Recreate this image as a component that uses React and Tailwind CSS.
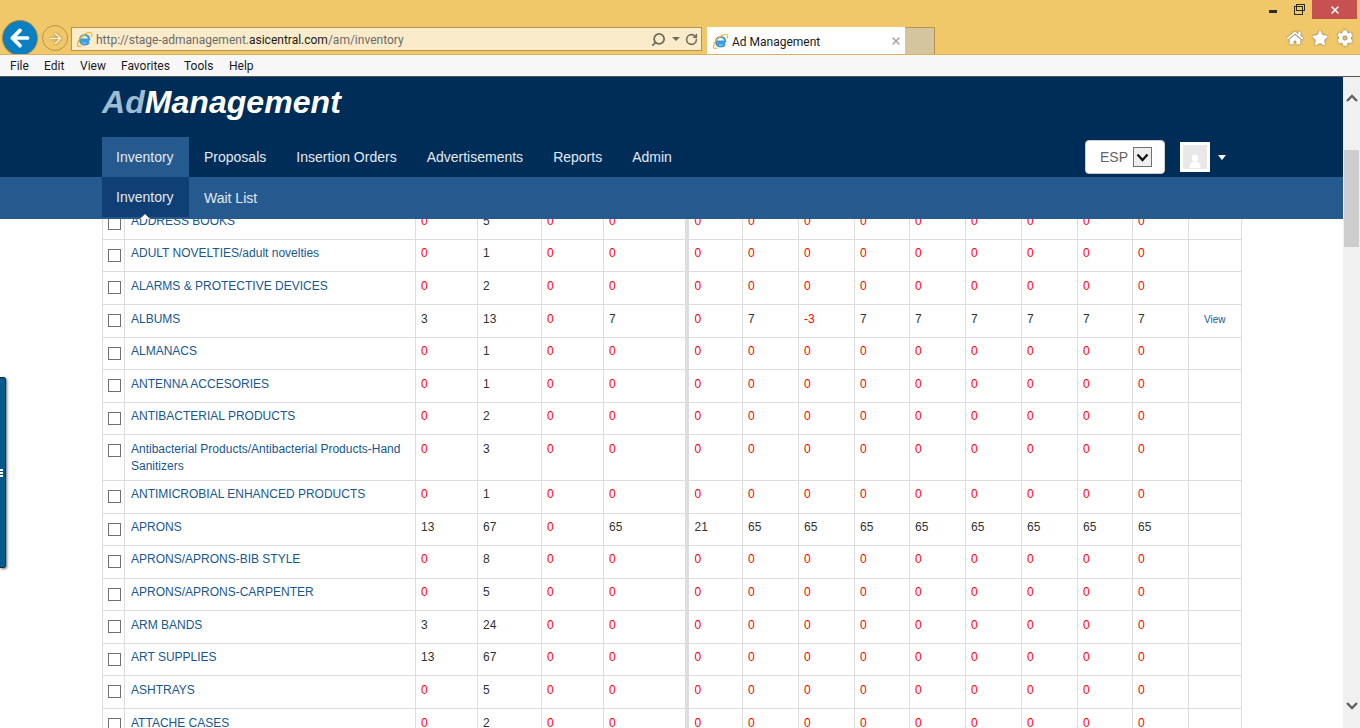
import { ArrowLeft, ArrowRight, Search, RotateCw, X } from 'lucide-react'
import { FaHome, FaStar, FaCog } from 'react-icons/fa'

const zeros = [0, 0, 0, 0, 0, 0, 0, 0, 0]

// tight rows sit one pixel higher, the original row heights are fractional
const rows = [
  { name: 'ADDRESS BOOKS', h: 'h-[32px]', tight: true, a: [0, 5, 0, 0], b: zeros },
  { name: 'ADULT NOVELTIES/adult novelties', h: 'h-[32px]', tight: true, a: [0, 1, 0, 0], b: zeros },
  { name: 'ALARMS & PROTECTIVE DEVICES', h: 'h-[33px]', a: [0, 2, 0, 0], b: zeros },
  { name: 'ALBUMS', h: 'h-[33px]', a: [3, 13, 0, 7], b: [0, 7, -3, 7, 7, 7, 7, 7, 7], view: true },
  { name: 'ALMANACS', h: 'h-[32px]', tight: true, a: [0, 1, 0, 0], b: zeros },
  { name: 'ANTENNA ACCESORIES', h: 'h-[33px]', a: [0, 1, 0, 0], b: zeros },
  { name: 'ANTIBACTERIAL PRODUCTS', h: 'h-[32px]', tight: true, a: [0, 2, 0, 0], b: zeros },
  { name: 'Antibacterial Products/Antibacterial Products-Hand Sanitizers', h: 'h-[46px]', a: [0, 3, 0, 0], b: zeros },
  { name: 'ANTIMICROBIAL ENHANCED PRODUCTS', h: 'h-[33px]', tight: true, a: [0, 1, 0, 0], b: zeros },
  { name: 'APRONS', h: 'h-[32px]', tight: true, a: [13, 67, 0, 65], b: [21, 65, 65, 65, 65, 65, 65, 65, 65] },
  { name: 'APRONS/APRONS-BIB STYLE', h: 'h-[33px]', tight: true, a: [0, 8, 0, 0], b: zeros },
  { name: 'APRONS/APRONS-CARPENTER', h: 'h-[32px]', tight: true, a: [0, 5, 0, 0], b: zeros },
  { name: 'ARM BANDS', h: 'h-[33px]', a: [3, 24, 0, 0], b: zeros },
  { name: 'ART SUPPLIES', h: 'h-[32px]', tight: true, a: [13, 67, 0, 0], b: zeros },
  { name: 'ASHTRAYS', h: 'h-[33px]', a: [0, 5, 0, 0], b: zeros },
  { name: 'ATTACHE CASES', h: 'h-[32px]', a: [0, 2, 0, 0], b: zeros },
]

const colWidths = [22, 291, 62, 64, 62, 83, 56, 56, 56, 55, 56, 56, 56, 55, 56, 53]

function IeLogo({ className }) {
  return (
    <svg className={className} viewBox="0 0 20 20" fill="none">
      <path d="M15.5 12.5H6.2M5.2 10H15.6C15.6 6.8 13.4 4.6 10.4 4.6C7.2 4.6 4.6 7 4.6 10.3C4.6 13.6 7 16 10.4 16C12.6 16 14.3 15 15.3 13.4" stroke="#3b9ddd" strokeWidth="2.4" />
      <path d="M2.5 16C0.5 12.5 7 5 12 2.8C15.5 1.2 18.8 1.2 18.6 4.2C18.5 5.2 18 6 17.5 6.8M1.6 15.2C1 17.8 3 19 6.4 17.4" stroke="#f0b429" strokeWidth="1.3" />
    </svg>
  )
}

function Num({ v }) {
  return <span className={v <= 0 ? 'text-[#ff0000]' : 'text-[#333333]'}>{v}</span>
}

function BrowserChrome() {
  return (
    <div className="font-['Roboto','Noto_Sans',sans-serif] shrink-0">
      <div className="h-[55px] bg-[#f0c869] border-b border-[#d8b25e] overflow-hidden">
        {/* window buttons */}
        <div className="h-[19px] flex justify-end items-start pr-[3px]">
          <div className="w-[8px] h-[3px] mt-[10px] mr-[17px] bg-[#2b2b2b]" />
          <div className="relative w-[9px] h-[9px] mt-[6px] mr-[9px] border-[1.5px] border-[#2b2b2b] bg-[#f0c869]">
            <div className="absolute -top-[3px] left-[1px] w-[9px] h-[7px] border border-[#2b2b2b]" />
          </div>
          <div className="w-[45px] h-[19px] bg-[#c75050] flex items-center justify-center">
            <X className="w-[12px] h-[12px] text-white" strokeWidth={3} />
          </div>
        </div>
        {/* nav, address and tabs */}
        <div className="h-[36px] flex items-start pl-[2px]">
          <div className="w-[36px] h-[36px] mt-[1px] rounded-full bg-[#0a80c2] border border-[#a8843f] flex items-center justify-center shrink-0">
            <ArrowLeft className="w-[26px] h-[26px] text-white" strokeWidth={3.4} />
          </div>
          <div className="w-[26px] h-[26px] mt-[6px] ml-[4px] rounded-full border border-[#b8954a] flex items-center justify-center shrink-0">
            <ArrowRight className="w-[17px] h-[17px] text-[#fbeecb] drop-shadow-[0_0_1px_#8a6d2f]" strokeWidth={2.4} />
          </div>
          <div className="w-[631px] h-[24px] mt-[8px] ml-[3px] bg-[#faecca] border border-[#b5934b] flex items-center pl-[4px] pr-[3px] shrink-0">
            <IeLogo className="w-[17px] h-[17px] shrink-0" />
            <div className="ml-[3px] pt-[2px] text-[12px] text-[#6b6b6b] whitespace-nowrap">
              http://stage-admanagement.<span className="text-[#1a1a1a]">asicentral.com</span>/am/inventory
            </div>
            <div className="ml-auto flex items-center text-[#6e6a5c]">
              <Search className="w-[15px] h-[15px] -scale-x-100" strokeWidth={2.8} />
              <div className="ml-[6px] w-0 h-0 border-x-[4px] border-x-transparent border-t-[4px] border-t-[#6e6a5c]" />
              <RotateCw className="ml-[5px] w-[13px] h-[13px]" strokeWidth={2.8} />
            </div>
          </div>
          <div className="w-[198px] h-[28px] mt-[8px] ml-[5px] bg-white flex items-center pl-[5px] pr-[3px] shrink-0">
            <IeLogo className="w-[17px] h-[17px] shrink-0" />
            <div className="ml-[3px] pt-[2px] text-[12px] text-[#1a1a1a] whitespace-nowrap">Ad Management</div>
            <X className="ml-auto w-[12px] h-[12px] text-[#a8a8a8]" strokeWidth={3.4} />
          </div>
          <div className="w-[30px] h-[28px] mt-[8px] bg-[#d5c59f] border border-b-0 border-l-0 border-[#b5934b] shrink-0" />
          <div className="ml-auto flex items-center pt-[11px] pr-[7px] gap-[9px]">
            <FaHome className="w-[16px] h-[16px] text-white drop-shadow-[0_0_1px_#6b6b6b]" />
            <FaStar className="w-[16px] h-[16px] text-white drop-shadow-[0_0_1px_#6b6b6b]" />
            <FaCog className="w-[16px] h-[16px] text-white drop-shadow-[0_0_1px_#6b6b6b]" />
          </div>
        </div>
      </div>
      <div className="h-[22px] bg-[#f7f7f7] border-b border-[#555555] flex items-center pt-[1px] pl-[10px] text-[12px] text-[#1a1a1a]">
        <span className="w-[34px]">File</span>
        <span className="w-[36px]">Edit</span>
        <span className="w-[41px]">View</span>
        <span className="w-[63px]">Favorites</span>
        <span className="w-[45px]">Tools</span>
        <span>Help</span>
      </div>
    </div>
  )
}

function Header() {
  return (
    <div className="relative z-10 shrink-0 font-['Liberation_Sans',sans-serif]">
      <div className="h-[100px] bg-[#002d58] pl-[102px] flex flex-col">
        <div className="h-[60px] text-[32px] leading-[50px] font-bold italic text-white tracking-[0.05px]">
          <span className="text-[#9dbbd2]">Ad</span>Management
        </div>
        <div className="flex items-stretch h-[40px] text-[14px] text-[#e3e9f0]">
          <div className="w-[87px] bg-[#265a8f] flex items-center pl-[14px]">Inventory</div>
          <div className="ml-[15px] flex items-center">Proposals</div>
          <div className="ml-[30px] flex items-center">Insertion Orders</div>
          <div className="ml-[30px] flex items-center">Advertisements</div>
          <div className="ml-[30px] flex items-center">Reports</div>
          <div className="ml-[30px] flex items-center">Admin</div>
          <div className="ml-auto w-[258px] flex items-start">
            <div className="w-[80px] h-[34px] mt-[3px] bg-white rounded-[4px] border border-[#cccccc] flex items-center pl-[14px]">
              <span className="text-[#666666]">ESP</span>
              <div className="ml-[5px] w-[19px] h-[20px] bg-[#eeeeee] border border-[#707070] flex items-center justify-center">
                <svg className="w-[13px] h-[9px]" viewBox="0 0 13 9" fill="none">
                  <path d="M1.5 1.5L6.5 7L11.5 1.5" stroke="#111111" strokeWidth="2.2" />
                </svg>
              </div>
            </div>
            <div className="ml-[15px] mt-[5px] w-[30px] h-[30px] bg-[#e8e8e8] border-[3px] border-white flex items-end justify-center">
              <svg className="w-[14px] h-[16px]" viewBox="0 0 14 16" fill="white">
                <circle cx="7" cy="5" r="3.2" />
                <path d="M1.5 15C1.5 10.5 3.5 8.5 7 8.5C10.5 8.5 12.5 10.5 12.5 15Z" />
              </svg>
            </div>
            <div className="ml-[8px] mt-[18px] w-0 h-0 border-x-[4.5px] border-x-transparent border-t-[5px] border-t-white" />
          </div>
        </div>
      </div>
      <div className="h-[42px] bg-[#265a8f] pl-[102px] flex items-start text-[14px] text-[#e3e9f0]">
        <div className="relative w-[87px] h-[40px] bg-[#0f3f75] flex items-center pl-[14px]">
          Inventory
          <div className="absolute -bottom-[2px] left-[38px] w-0 h-0 border-x-[5px] border-x-transparent border-b-[5px] border-b-white" />
        </div>
        <div className="ml-[15px] h-[42px] flex items-center">Wait List</div>
      </div>
    </div>
  )
}

function InventoryTable() {
  return (
    <table className="table-fixed border-collapse w-[1139px] ml-[102px] -mt-[12px] text-[12px] font-['Liberation_Sans',sans-serif] bg-white">
      <colgroup>
        {colWidths.map((w, i) => (
          <col key={i} style={{ width: w }} />
        ))}
      </colgroup>
      <tbody>
        {rows.map((row) => {
          const pad = row.tight ? 'pt-[5px]' : 'pt-[6px]'
          return (
            <tr key={row.name} className={row.h}>
              <td className="border border-[#dddddd] align-top pl-[5px] pt-[9px]">
                <div className="w-[13px] h-[13px] border-[1.5px] border-[#707070]" />
              </td>
              <td className={`border border-[#dddddd] align-top pl-[6px] pr-[6px] leading-[17px] text-[#18578f] ${pad}`}>
                {row.name}
              </td>
              {row.a.map((v, i) => (
                <td key={i} className={`border border-[#dddddd] align-top pl-[5px] leading-[17px] ${pad}`}>
                  <Num v={v} />
                </td>
              ))}
              {row.b.map((v, i) => (
                <td key={i} className={`border border-[#dddddd] align-top leading-[17px] ${pad} ${i === 0 ? 'border-l-[4px] pl-[6px]' : 'pl-[5px]'}`}>
                  <Num v={v} />
                </td>
              ))}
              <td className="border border-[#dddddd] align-top pl-[15px] pt-[6px] leading-[17px] text-[10px] text-[#18578f]">
                {row.view ? 'View' : ''}
              </td>
            </tr>
          )
        })}
      </tbody>
    </table>
  )
}

function Scrollbar() {
  return (
    <div className="w-[17px] shrink-0 bg-[#f0f0f0] flex flex-col items-center">
      <svg className="w-[12px] h-[8px] mt-[17px]" viewBox="0 0 12 8" fill="none">
        <path d="M1 7L6 2L11 7" stroke="#606060" strokeWidth="2.4" />
      </svg>
      <div className="w-[15px] h-[97px] mt-[48px] bg-[#cdcdcd]" />
      <svg className="w-[12px] h-[8px] mt-auto mb-[18px]" viewBox="0 0 12 8" fill="none">
        <path d="M1 1L6 6L11 1" stroke="#606060" strokeWidth="2.4" />
      </svg>
    </div>
  )
}

export default function App() {
  return (
    <div className="relative w-[1360px] h-[728px] overflow-hidden flex flex-col bg-white">
      <BrowserChrome />
      <div className="flex flex-1 min-h-0">
        <div className="flex-1 min-w-0 flex flex-col">
          <Header />
          <div className="flex-1 min-h-0 overflow-hidden">
            <InventoryTable />
          </div>
        </div>
        <Scrollbar />
      </div>
      {/* side drawer tab */}
      <div className="absolute left-0 top-[377px] w-[6px] h-[191px] bg-[#005a8c] border-r border-y border-[#1a2a38] rounded-r-[3px] shadow-[1px_1px_3px_rgba(0,0,0,0.6)] flex flex-col justify-center gap-[1px]">
        <div className="w-[3px] h-[2px] bg-white" />
        <div className="w-[3px] h-[2px] bg-white" />
        <div className="w-[3px] h-[2px] bg-white" />
      </div>
    </div>
  )
}
